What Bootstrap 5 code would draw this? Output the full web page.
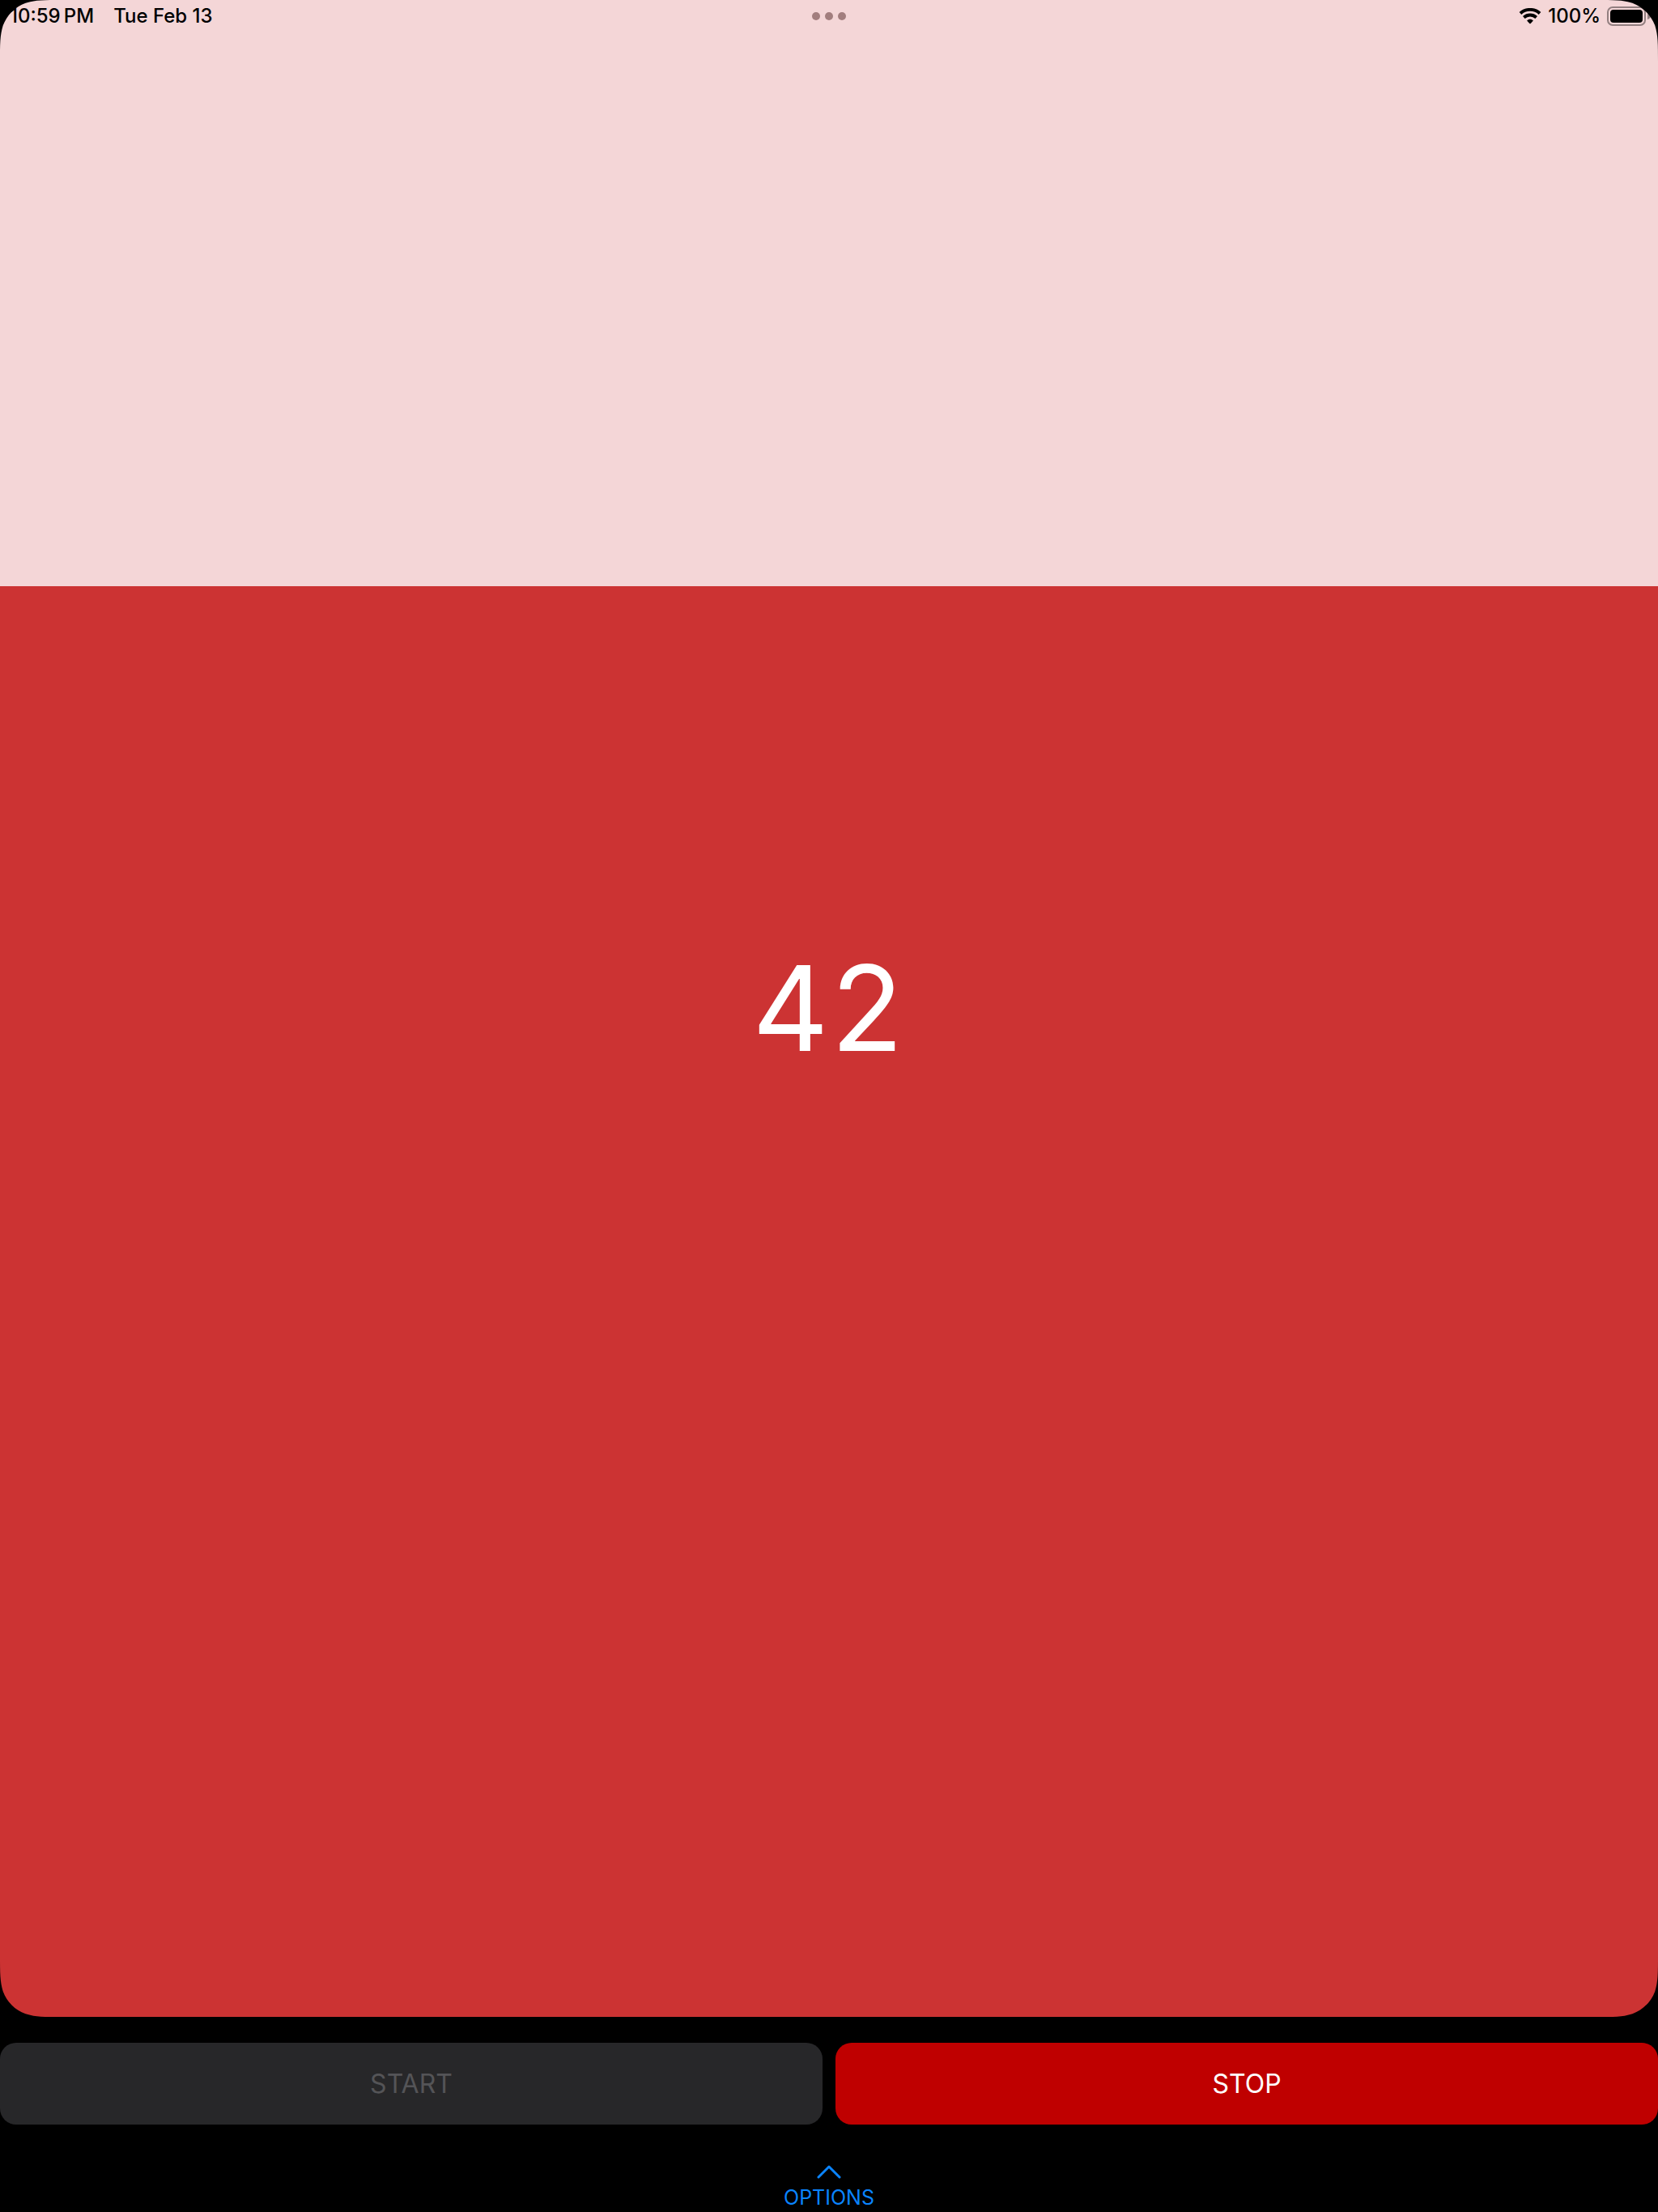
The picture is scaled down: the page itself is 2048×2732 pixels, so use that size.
<!DOCTYPE html>
<html lang="en">
<head>
<meta charset="utf-8">
<meta name="viewport" content="width=device-width, initial-scale=1">
<title>Timer</title>
<link href="https://cdn.jsdelivr.net/npm/bootstrap@5.3.0/dist/css/bootstrap.min.css" rel="stylesheet">
<style>
body { background: #000; font-family: Inter, "Liberation Sans", sans-serif; }
.timer-panel { background: #f4d6d7; }
.timer-fill { background: #cc3333; }
.status-line { height: 40px; padding: 0 12px; font-size: 24px; font-weight: 500; line-height: 40px; color: #000; }
.status-side { flex: 1 1 0; }
.status-start { gap: 24px; }
.menu-dots { gap: 6px; }
.menu-dot { width: 10px; height: 10px; border-radius: 50%; background: #a27e7e; }
.time-left { font-size: 146px; line-height: 176px; padding-bottom: 2px; font-feature-settings: "tnum"; }
.corner { position: absolute; width: 77px; height: 77px; fill: #000; }
.corner-tl { top: 0; left: 0; }
.corner-tr { top: 0; right: 0; transform: scaleX(-1); }
.corner-bl { bottom: 0; left: 0; transform: scaleY(-1); }
.corner-br { bottom: 0; right: 0; transform: scale(-1, -1); }
.control-btn { height: 101px; border: 0; border-radius: 20px; font-size: 32px; line-height: 40px; }
.control-btn.start-btn, .control-btn.start-btn:disabled { background: #272729; color: #545457; opacity: 1; }
.control-btn.stop-btn { background: #bf0000; color: #fff; }
.options-btn { color: #0a84ff; font-size: 25px; line-height: 32px; height: 108px; padding: 49px 0 0; border: 0; }
.options-btn svg { margin-bottom: 7px; }
</style>
</head>
<body class="d-flex flex-column min-vh-100">
<main class="timer-panel position-relative flex-grow-1 d-flex flex-column">
  <div class="timer-fill position-absolute bottom-0 start-0 w-100" style="height: 70.93%"></div>
  <header class="status-line position-relative d-flex align-items-center">
    <div class="status-side status-start d-flex"><span>10:59&#8201;PM</span><span>Tue Feb 13</span></div>
    <div class="menu-dots d-flex" aria-label="Multitasking">
      <span class="menu-dot"></span><span class="menu-dot"></span><span class="menu-dot"></span>
    </div>
    <div class="status-side d-flex justify-content-end align-items-center gap-2">
      <svg width="28" height="20" viewBox="0 0 28 20" fill="none" aria-label="Wi-Fi">
        <path d="M2 6.500C8.500.300 19.500.300 26 6.500" stroke="#000" stroke-width="3.900" stroke-linecap="butt"/>
        <path d="M6.300 11.500C10.800 7.500 17.200 7.500 21.700 11.500" stroke="#000" stroke-width="3.900" stroke-linecap="butt"/>
        <path d="M10.100 15.500C12.200 13.300 15.800 13.300 17.900 15.500L14.700 19Q14 19.700 13.300 19Z" fill="#000"/>
      </svg>
      <span>100%</span>
      <svg width="51" height="24" viewBox="0 0 51 24" overflow="visible" aria-label="Battery full">
        <rect x="1" y="1" width="46" height="22" rx="6" fill="none" stroke="#927f80" stroke-width="2"/>
        <rect x="4" y="4" width="40" height="16" rx="4"/>
        <path d="M50 8V16Q54 14.500 54 12T50 8Z" fill="#927f80"/>
      </svg>
    </div>
  </header>
  <div class="position-absolute top-50 start-50 translate-middle time-left text-white">42</div>
  <svg width="0" height="0" class="position-absolute"><defs><path id="edge" d="M0 0H76.400C54.400 0 43.400 0 33.500 3.300L31.600 3.700C18.600 8.500 8.500 18.600 3.700 31.600C0 43.400 0 54.400 0 76.400Z"/></defs></svg>
  <svg class="corner corner-tl"><use href="#edge"/></svg>
  <svg class="corner corner-tr"><use href="#edge"/></svg>
  <svg class="corner corner-bl"><use href="#edge"/></svg>
  <svg class="corner corner-br"><use href="#edge"/></svg>
</main>
<footer>
  <div class="d-flex gap-3" style="padding-top: 32px">
    <button type="button" class="btn control-btn start-btn w-50" disabled>START</button>
    <button type="button" class="btn control-btn stop-btn w-50">STOP</button>
  </div>
  <button type="button" class="btn options-btn w-100 d-flex flex-column align-items-center">
    <svg width="30" height="18" viewBox="0 0 30 18" class="flex-shrink-0" fill="none" stroke="currentColor" stroke-width="3" stroke-linecap="round" stroke-linejoin="round"><path d="M2 16L15 3L28 16"/></svg>
    <span>OPTIONS</span>
  </button>
</footer>
<script src="https://cdn.jsdelivr.net/npm/bootstrap@5.3.0/dist/js/bootstrap.bundle.min.js"></script>
</body>
</html>
